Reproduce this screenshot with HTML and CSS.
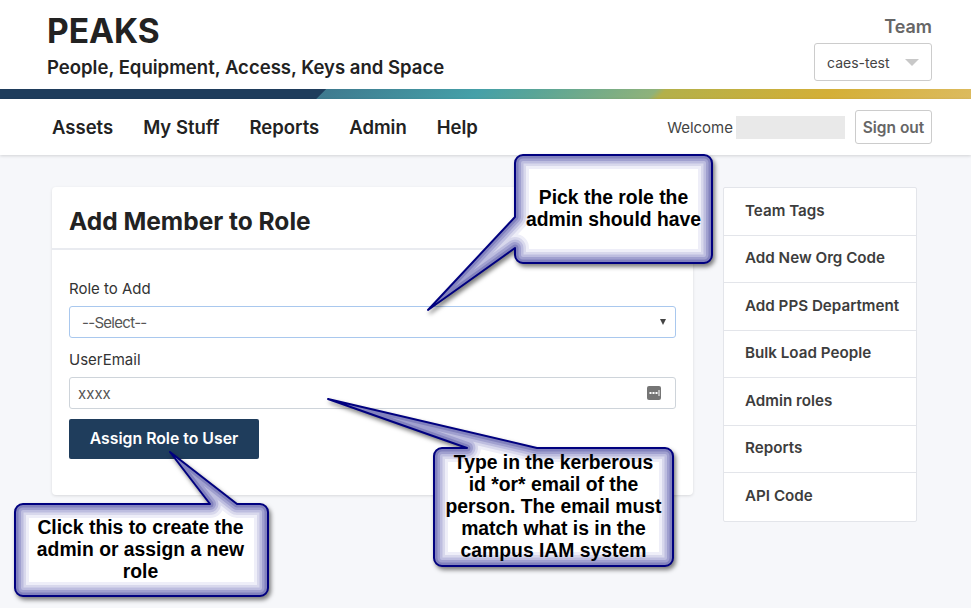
FILE: index.html
```html
<!DOCTYPE html>
<html lang="en">
<head>
  <meta charset="UTF-8" />
  <title>PEAKS</title>
  <link rel="stylesheet" href="styles.css">
</head>
<body>
  <header class="top">
    <div class="brand">
      <h1>PEAKS</h1>
      <div class="tagline">People, Equipment, Access, Keys and Space</div>
    </div>
    <div class="team">
      <div class="team-label">Team</div>
      <button class="team-pick">caes-test <span class="caret"></span></button>
    </div>
  </header>
  <div class="stripe"></div>

  <nav class="nav">
    <div class="nav-links">
      <a>Assets</a>
      <a>My Stuff</a>
      <a>Reports</a>
      <a>Admin</a>
      <a>Help</a>
    </div>
    <div class="nav-user">
      <span>Welcome</span>
      <span class="name-block"></span>
      <button class="signout">Sign out</button>
    </div>
  </nav>

  <main class="content">
    <section class="card">
      <h2>Add Member to Role</h2>
      <form class="card-body">
        <label>Role to Add</label>
        <div class="field field-select">
          <span class="select-text">--Select--</span>
          <span class="select-arrow"></span>
        </div>
        <label>UserEmail</label>
        <div class="field field-input">
          <span>xxxx</span>
          <svg class="key-icon" width="14" height="14" viewBox="0 0 14 14">
            <rect width="14" height="14" rx="2" fill="#757575"/>
            <rect x="2.5" y="6" width="2" height="2" fill="#fff"/>
            <rect x="5.5" y="6" width="2" height="2" fill="#fff"/>
            <rect x="8.5" y="6" width="2" height="2" fill="#fff"/>
            <rect x="11.5" y="4" width="1" height="6" fill="#fff"/>
          </svg>
        </div>
        <button type="button" class="assign">Assign Role to User</button>
      </form>
    </section>

    <aside class="side">
      <a>Team Tags</a>
      <a>Add New Org Code</a>
      <a>Add PPS Department</a>
      <a>Bulk Load People</a>
      <a>Admin roles</a>
      <a>Reports</a>
      <a>API Code</a>
    </aside>
  </main>

  <div class="callout callout-role">
    <svg width="971" height="608">
      <defs>
        <path id="balloonRole" d="M523 155H704a8 8 0 0 1 8 8V255a8 8 0 0 1-8 8H523a8 8 0 0 1-8-8V248L428 310L515 217V163a8 8 0 0 1 8-8Z"/>
        <clipPath id="clipRole"><use href="#balloonRole"/></clipPath>
      </defs>
      <use href="#balloonRole" class="base"/>
      <g clip-path="url(#clipRole)">
        <use href="#balloonRole" class="glow-1"/>
        <use href="#balloonRole" class="glow-2"/>
        <use href="#balloonRole" class="glow-3"/>
        <use href="#balloonRole" class="glow-4"/>
        <use href="#balloonRole" class="glow-5"/>
      </g>
      <use href="#balloonRole" class="edge"/>
    </svg>
    <p>Pick the role the admin should have</p>
  </div>

  <div class="callout callout-email">
    <svg width="971" height="608">
      <defs>
        <path id="balloonEmail" d="M442 448H467L328 399L537 448H665a8 8 0 0 1 8 8V558a8 8 0 0 1-8 8H442a8 8 0 0 1-8-8V456a8 8 0 0 1 8-8Z"/>
        <clipPath id="clipEmail"><use href="#balloonEmail"/></clipPath>
      </defs>
      <use href="#balloonEmail" class="base"/>
      <g clip-path="url(#clipEmail)">
        <use href="#balloonEmail" class="glow-1"/>
        <use href="#balloonEmail" class="glow-2"/>
        <use href="#balloonEmail" class="glow-3"/>
        <use href="#balloonEmail" class="glow-4"/>
        <use href="#balloonEmail" class="glow-5"/>
      </g>
      <use href="#balloonEmail" class="edge"/>
    </svg>
    <p>Type in the kerberous id *or* email of the person. The email must match what is in the campus IAM system</p>
  </div>

  <div class="callout callout-assign">
    <svg width="971" height="608">
      <defs>
        <path id="balloonAssign" d="M23 504H210L170 452L237 504H260a8 8 0 0 1 8 8V588a8 8 0 0 1-8 8H23a8 8 0 0 1-8-8V512a8 8 0 0 1 8-8Z"/>
        <clipPath id="clipAssign"><use href="#balloonAssign"/></clipPath>
      </defs>
      <use href="#balloonAssign" class="base"/>
      <g clip-path="url(#clipAssign)">
        <use href="#balloonAssign" class="glow-1"/>
        <use href="#balloonAssign" class="glow-2"/>
        <use href="#balloonAssign" class="glow-3"/>
        <use href="#balloonAssign" class="glow-4"/>
        <use href="#balloonAssign" class="glow-5"/>
      </g>
      <use href="#balloonAssign" class="edge"/>
    </svg>
    <p>Click this to create the admin or assign a new role</p>
  </div>
</body>
</html>
```

FILE: styles.css
```css
* {
  box-sizing: border-box;
}

body {
  margin: 0;
  height: 608px;
  overflow: hidden;
  position: relative;
  background: #f6f7fa;
  font-family: 'Inter', 'Liberation Sans', sans-serif;
  color: #222;
}

.top {
  background: white;
  height: 89px;
  padding: 0 39px 0 47px;
  display: flex;
  justify-content: space-between;
}

.brand h1 {
  margin: 10px 0 0;
  font-size: 33.5px;
  line-height: 42px;
  font-weight: 700;
}

.tagline {
  margin-top: 3px;
  font-size: 18.55px;
  line-height: 24px;
  font-weight: 600;
}

.team {
  display: flex;
  flex-direction: column;
  align-items: flex-end;
}

.team-label {
  margin-top: 16px;
  font-size: 18px;
  line-height: 22px;
  font-weight: 600;
  color: #666;
}

.team-pick {
  margin-top: 5px;
  width: 118px;
  height: 38px;
  padding: 0 12px;
  display: flex;
  align-items: center;
  justify-content: space-between;
  background: white;
  border: 1px solid #ccc;
  border-radius: 3px;
  font: inherit;
  font-size: 14px;
  color: #444;
}

.caret {
  width: 0;
  height: 0;
  border-left: 7px solid transparent;
  border-right: 7px solid transparent;
  border-top: 7px solid #c8c8c8;
}

.stripe {
  height: 10px;
  background: linear-gradient(135deg, #1f3d5c 0, #1f3d5c 33.2%, #3f7a8f 33.3%, #45a0a8 49%, #5aa597 55%, #8fb27a 67%, #b3b04a 68%, #d4af37 85%, #dcbb60 100%);
}

.nav {
  background: white;
  height: 56px;
  padding: 0 39px 0 52px;
  display: flex;
  justify-content: space-between;
  align-items: center;
  box-shadow: 0 1px 3px rgba(0, 0, 0, 0.15);
}

.nav-links {
  display: flex;
  gap: 30px;
  font-size: 18.5px;
  font-weight: 600;
}

.nav-user {
  display: flex;
  align-items: center;
  font-size: 15px;
  color: #444;
}

.name-block {
  width: 109px;
  height: 23px;
  margin: 0 10px 0 3px;
  background: #e9e9e9;
}

.signout {
  width: 77px;
  height: 34px;
  background: white;
  border: 1px solid #ccc;
  border-radius: 3px;
  font: inherit;
  font-size: 15.5px;
  font-weight: 600;
  color: #666;
}

.content {
  padding: 32px 54px 0 52px;
  display: flex;
  justify-content: space-between;
  align-items: flex-start;
}

.card {
  width: 641px;
  height: 308px;
  background: white;
  border-radius: 4px;
  box-shadow: 0 1px 3px rgba(0, 0, 0, 0.12);
}

.card h2 {
  margin: 0;
  height: 63px;
  padding: 7px 17px 0;
  display: flex;
  align-items: center;
  font-size: 24.5px;
  font-weight: 700;
  border-bottom: 2px solid #e9ebf0;
}

.card-body {
  padding: 29px 17px 0;
  font-size: 15px;
}

.card-body label {
  display: block;
  line-height: 20px;
  color: #333;
  margin-bottom: 7px;
}

.field {
  height: 32px;
  padding: 0 14px 0 12px;
  margin-bottom: 12px;
  display: flex;
  align-items: center;
  justify-content: space-between;
  background: white;
  border: 1px solid #ced4da;
  border-radius: 3px;
  color: #555;
}

.field-input {
  padding-left: 8px;
}

.field-select {
  border-color: #a9c8ee;
  padding-right: 9px;
}

.select-text {
  letter-spacing: -0.7px;
}

.select-arrow {
  width: 0;
  height: 0;
  border-left: 3px solid transparent;
  border-right: 3px solid transparent;
  border-top: 6px solid #444;
}

.assign {
  width: 190px;
  height: 40px;
  margin-top: -2px;
  padding-bottom: 2px;
  background: #1f3d5c;
  border: 0;
  border-radius: 2px;
  color: white;
  font: inherit;
  font-size: 15.8px;
  font-weight: 600;
}

.side {
  width: 194px;
  background: white;
  border: 1px solid #e3e5ea;
  border-radius: 2px;
  display: flex;
  flex-direction: column;
}

.side a {
  height: 47.5px;
  padding: 0 0 2px 21px;
  display: flex;
  align-items: center;
  font-size: 15.2px;
  font-weight: 600;
  color: #3d3d3d;
  border-bottom: 1px solid #e3e5ea;
}

.side a:last-child {
  border-bottom: 0;
}

/* Annotation balloons sit on top of the page */
.callout {
  position: absolute;
  display: flex;
  align-items: center;
  justify-content: center;
}

.callout svg {
  position: absolute;
  overflow: visible;
  filter: drop-shadow(2px 3px 2px rgba(0, 0, 0, 0.5));
}

.callout use {
  fill: none;
  stroke-linejoin: round;
}

.callout .base {
  fill: white;
}

.callout .glow-1 {
  stroke: #eeeef8;
  stroke-width: 28;
}

.callout .glow-2 {
  stroke: #d8d8ec;
  stroke-width: 22;
}

.callout .glow-3 {
  stroke: #bdbddf;
  stroke-width: 17;
}

.callout .glow-4 {
  stroke: #a0a0cf;
  stroke-width: 12;
}

.callout .glow-5 {
  stroke: #8282bd;
  stroke-width: 7;
}

.callout .edge {
  stroke: #00007f;
  stroke-width: 2;
}

.callout p {
  position: relative;
  margin: 0;
  text-align: center;
  font-family: 'Liberation Sans', Arial, sans-serif;
  font-size: 19.33px;
  line-height: 22px;
  font-weight: 700;
  color: black;
}

.callout-role {
  left: 515px;
  top: 155px;
  width: 197px;
  height: 108px;
  padding: 0 8px;
}

.callout-role svg {
  left: -515px;
  top: -155px;
}

.callout-email {
  left: 434px;
  top: 448px;
  width: 239px;
  height: 118px;
  padding: 0 10px;
}

.callout-email svg {
  left: -434px;
  top: -448px;
}

.callout-assign {
  left: 15px;
  top: 504px;
  width: 253px;
  height: 92px;
  padding: 0 16px 0 14px;
}

.callout-assign svg {
  left: -15px;
  top: -504px;
}
```
